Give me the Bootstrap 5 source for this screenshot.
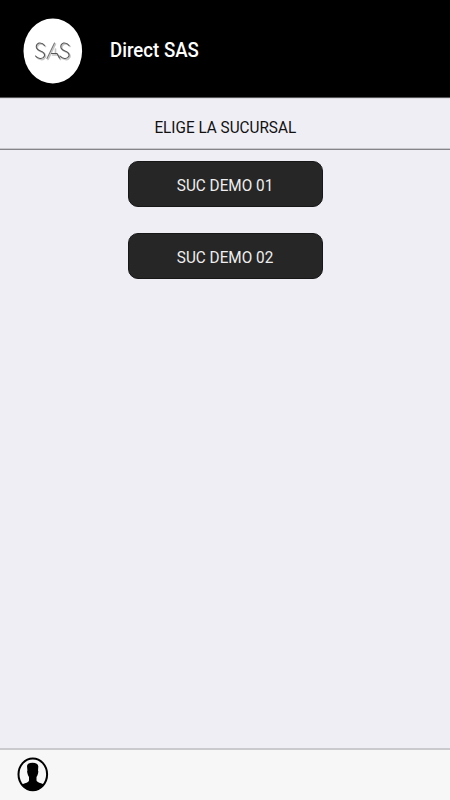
<!DOCTYPE html>
<html lang="es">
<head>
<meta charset="utf-8">
<meta name="viewport" content="width=device-width, initial-scale=1">
<title>Direct SAS</title>
<link href="https://cdn.jsdelivr.net/npm/bootstrap@5.3.0/dist/css/bootstrap.min.css" rel="stylesheet">
<style>
body { font-family: Roboto, "Liberation Sans", sans-serif; background: #efeef4; color: #111; font-size: 17px; line-height: 20px; }
.app-header { height: 98px; background: #000; border-bottom: 1px solid #555; padding: 1px 23px 0; gap: 27px; }
.brand-logo { width: 60px; height: 66px; margin-top: 3px; }
.brand-name { font-size: 20px; line-height: 24px; font-weight: 500; padding-top: 1px; transform: scaleX(.932); transform-origin: left; }
.section-title { height: 52px; border-top: 1px solid #dcdbe0; border-bottom: 1px solid #858589; box-shadow: inset 0 -1px #c9c8cd; padding-top: 6px; }
.narrow { display: inline-block; transform: translateX(.5px) scaleX(.9); white-space: nowrap; }
.branches { padding-top: 11px; gap: 26px; }
.btn-branch, .btn-branch:hover { width: 195px; height: 46px; border-radius: 10px; background: #262626; border: 1px solid #171717; color: #eee; font-size: 17px; line-height: 20px; padding: 1px 0 0; }
.app-footer { height: 52px; background: #f7f7f7; border-top: 2px solid #cacace; padding: 0 17px; }
</style>
<script src="https://cdn.jsdelivr.net/npm/bootstrap@5.3.0/dist/js/bootstrap.bundle.min.js"></script>
</head>
<body class="d-flex flex-column vh-100 overflow-hidden m-0">
<header class="app-header d-flex align-items-center flex-shrink-0 text-white">
  <svg class="brand-logo flex-shrink-0" viewBox="0 0 60 66" aria-hidden="true">
    <ellipse cx="29.8" cy="33" rx="29.3" ry="32.5" fill="#fff"/>
    <g fill="none" stroke-linecap="round" stroke-linejoin="round">
      <g stroke="#c4c4c4" stroke-width="1.6" transform="translate(1 1)">
        <path d="M21.500 27.500Q19.500 24.500 16 25Q12.500 26.500 13.500 30Q14.500 32 17.500 33Q22 34.500 21.500 38Q20 41 17 40.500Q14 40 12.500 38"/>
        <path d="M24 40.500L31.500 25M31.500 30V36M28.500 36H34L36.500 40.500"/>
        <path d="M46 27.500Q44 24.500 40.500 25Q37 26.500 38 30Q39 32 42 33Q46.500 34.500 46 38Q44.500 41 41.500 40.500Q38.500 40 37 38"/>
      </g>
      <g stroke="#555" stroke-width="1.1">
        <path d="M21.500 27.500Q19.500 24.500 16 25Q12.500 26.500 13.500 30Q14.500 32 17.500 33Q22 34.500 21.500 38Q20 41 17 40.500Q14 40 12.500 38"/>
        <path d="M24 40.500L31.500 25" stroke="#777"/>
        <path d="M28.500 35.500H34L36.500 40"/>
        <path d="M46 27.500Q44 24.500 40.500 25Q37 26.500 38 30Q39 32 42 33Q46.500 34.500 46 38Q44.500 41 41.500 40.500Q38.500 40 37 38"/>
      </g>
    </g>
  </svg>
  <span class="brand-name text-nowrap">Direct SAS</span>
</header>
<main class="flex-grow-1 d-flex flex-column">
  <div class="section-title d-flex justify-content-center align-items-center"><span class="narrow">ELIGE LA SUCURSAL</span></div>
  <div class="branches d-flex flex-column align-items-center">
    <button type="button" class="btn btn-branch"><span class="narrow">SUC DEMO 01</span></button>
    <button type="button" class="btn btn-branch"><span class="narrow">SUC DEMO 02</span></button>
  </div>
</main>
<footer class="app-footer d-flex align-items-center flex-shrink-0">
  <svg width="32" height="36" viewBox="0 0 32 36" role="img" aria-label="Perfil">
    <ellipse cx="15.800" cy="17.300" rx="14.300" ry="15.900" fill="#f7f7f7" stroke="#000" stroke-width="2"/>
    <path d="M10 9Q10.500 5.800 15.500 5.800Q21 5.800 21.300 9.500L21 13.500Q21.700 14 21 16.500Q20.500 18.500 19.500 20V23.500Q20 25.300 24 26.300Q26.500 27 26.700 28Q22 33.500 15.800 33.500Q9.500 33.500 5 28Q5.500 27 8 26.300Q11.800 25.300 12 23.500V20Q11 18.500 10.500 16.500Q9.700 14 10.400 13.500Z" fill="#000"/>
  </svg>
</footer>
</body>
</html>
